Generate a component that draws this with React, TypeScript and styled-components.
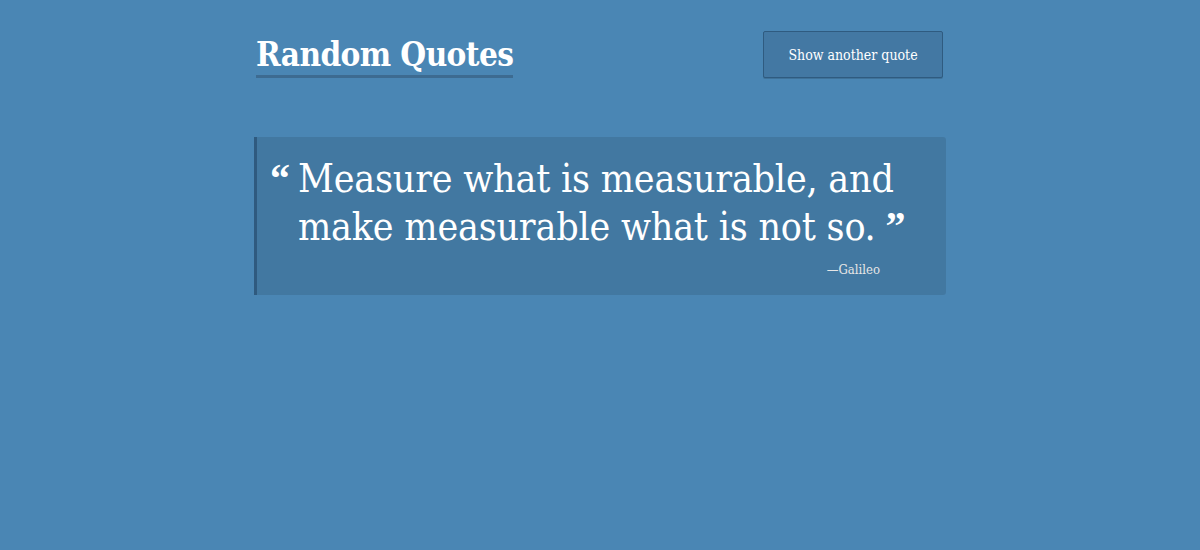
import React from "react";
import styled, { createGlobalStyle } from "styled-components";

const Global = createGlobalStyle`
  html, body { margin: 0; padding: 0; }
  body {
    background: #4a86b4;
    color: #fff;
    font-family: "DejaVu Serif Condensed", "DejaVu Serif", "Liberation Serif", serif;
    min-height: 550px;
  }
`;

const Page = styled.main`
  width: 692px;
  margin: 0 auto;
  padding-top: 31px;
`;

const Header = styled.header`
  display: flex;
  justify-content: space-between;
  align-items: flex-start;
`;

const Title = styled.h1`
  margin: 4px 0 0 2px;
  font-size: 33px;
  font-weight: 700;
  line-height: 40px;
  border-bottom: 3px solid #3d6b91;
  letter-spacing: -0.6px;
`;

const Button = styled.button`
  margin-right: 3px;
  width: 180px;
  height: 47px;
  background: #4378a3;
  border: 1px solid #2f5b80;
  border-radius: 2px;
  box-shadow: 0 1px 0 rgba(0, 0, 0, 0.15);
  color: #fff;
  font-family: inherit;
  font-size: 14px;
  cursor: pointer;
`;

const Card = styled.section`
  margin-top: 59px;
  background: rgba(0, 0, 0, 0.1);
  border-left: 3px solid #2f5a7f;
  border-radius: 0 3px 3px 0;
  padding: 18px 20px 18px 13px;
`;

const QuoteRow = styled.div`
  display: flex;
  align-items: flex-start;
`;

const OpenMark = styled.span`
  font-family: "Liberation Serif", serif;
  font-size: 40px;
  font-weight: 700;
  line-height: 1;
  width: 28px;
  flex: none;
  margin-top: 4px;
`;

const QuoteText = styled.p`
  margin: 0;
  font-size: 39px;
  line-height: 48px;
  letter-spacing: -0.2px;
`;

const CloseMark = styled.span`
  font-family: "Liberation Serif", serif;
  font-size: 40px;
  font-weight: 700;
  line-height: 0;
  margin-left: 10px;
  vertical-align: 1px;
`;

const Author = styled.p`
  margin: 11px 46px 0 0;
  text-align: right;
  font-size: 13px;
  color: #e6e6e6;
`;

export default function App() {
  return (
    <>
      <Global />
      <Page>
        <Header>
          <Title>Random Quotes</Title>
          <Button>Show another quote</Button>
        </Header>
        <Card>
          <QuoteRow>
            <OpenMark>“</OpenMark>
            <QuoteText>
              Measure what is measurable, and make measurable what is not so.
              <CloseMark>”</CloseMark>
            </QuoteText>
          </QuoteRow>
          <Author>—Galileo</Author>
        </Card>
      </Page>
    </>
  );
}
